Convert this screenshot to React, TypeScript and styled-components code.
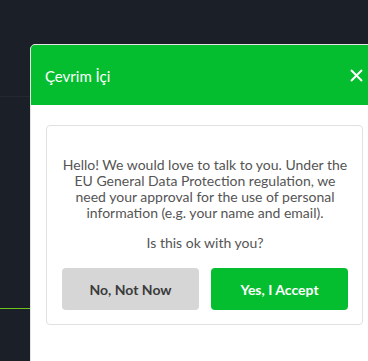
import React from "react";
import styled, { createGlobalStyle } from "styled-components";

const Global = createGlobalStyle`
  html, body { margin: 0; padding: 0; }
  body {
    width: 368px;
    height: 361px;
    overflow: hidden;
    background: #1b1f28;
    font-family: Lato, "Open Sans", sans-serif;
  }
`;

const Page = styled.div`
  position: relative;
  width: 368px;
  height: 361px;
  overflow: hidden;
  background: #1b1f28;
  display: flex;
  flex-direction: column;
`;

const TopBand = styled.div`
  height: 96px;
  border-bottom: 1px solid #242831;
`;

const Spacer = styled.div`
  height: 211px;
  border-bottom: 1px solid #6cc51f;
  width: 30px;
`;

const Widget = styled.div`
  position: absolute;
  left: 30px;
  top: 44px;
  width: 350px;
  height: 330px;
  box-sizing: border-box;
  border: 1px solid #e4e4e4;
  border-radius: 5px 5px 0 0;
  background: #ffffff;
  overflow: hidden;
  display: flex;
  flex-direction: column;
`;

const Header = styled.div`
  height: 60px;
  background: #04be2f;
  display: flex;
  align-items: center;
  justify-content: space-between;
  padding: 0 16px 0 14px;
`;

const Title = styled.span`
  color: #ffffff;
  font-size: 15px;
  font-family: Lato, sans-serif;
  padding-top: 1px;
`;

const Close = styled.button`
  border: 0;
  background: transparent;
  padding: 0;
  width: 13px;
  height: 13px;
  display: flex;
  cursor: pointer;
`;

const Body = styled.div`
  padding: 20px 16px 0 15px;
`;

const Card = styled.div`
  border: 1px solid #e1e1e1;
  border-radius: 4px;
  padding: 31px 14px 14px 15px;
  display: flex;
  flex-direction: column;
  align-items: center;
`;

const Text = styled.p`
  margin: 0;
  color: #555555;
  font-size: 14px;
  line-height: 16px;
  text-align: center;
`;

const Question = styled(Text)`
  margin-top: 14px;
`;

const Buttons = styled.div`
  margin-top: 17px;
  display: grid;
  grid-template-columns: 1fr 1fr;
  gap: 12px;
  width: 100%;
`;

const Btn = styled.button<{ $primary?: boolean }>`
  height: 42px;
  border: 0;
  border-radius: 4px;
  font-family: Lato, sans-serif;
  font-weight: 700;
  font-size: 14px;
  background: ${(p) => (p.$primary ? "#04be2f" : "#d6d6d6")};
  color: ${(p) => (p.$primary ? "#ffffff" : "#3b3b3b")};
  cursor: pointer;
`;

export default function App() {
  return (
    <>
      <Global />
      <Page>
        <TopBand />
        <Spacer />
        <Widget>
          <Header>
            <Title>Çevrim İçi</Title>
            <Close aria-label="close">
              <svg width="13" height="13" viewBox="0 0 13 13">
                <path d="M1 1 L12 12 M12 1 L1 12" stroke="#fff" strokeWidth="2" />
              </svg>
            </Close>
          </Header>
          <Body>
            <Card>
              <Text>
                Hello! We would love to talk to you. Under the
                <br />
                EU General Data Protection regulation, we
                <br />
                need your approval for the use of personal
                <br />
                information (e.g. your name and email).
              </Text>
              <Question>Is this ok with you?</Question>
              <Buttons>
                <Btn>No, Not Now</Btn>
                <Btn $primary>Yes, I Accept</Btn>
              </Buttons>
            </Card>
          </Body>
        </Widget>
      </Page>
    </>
  );
}
